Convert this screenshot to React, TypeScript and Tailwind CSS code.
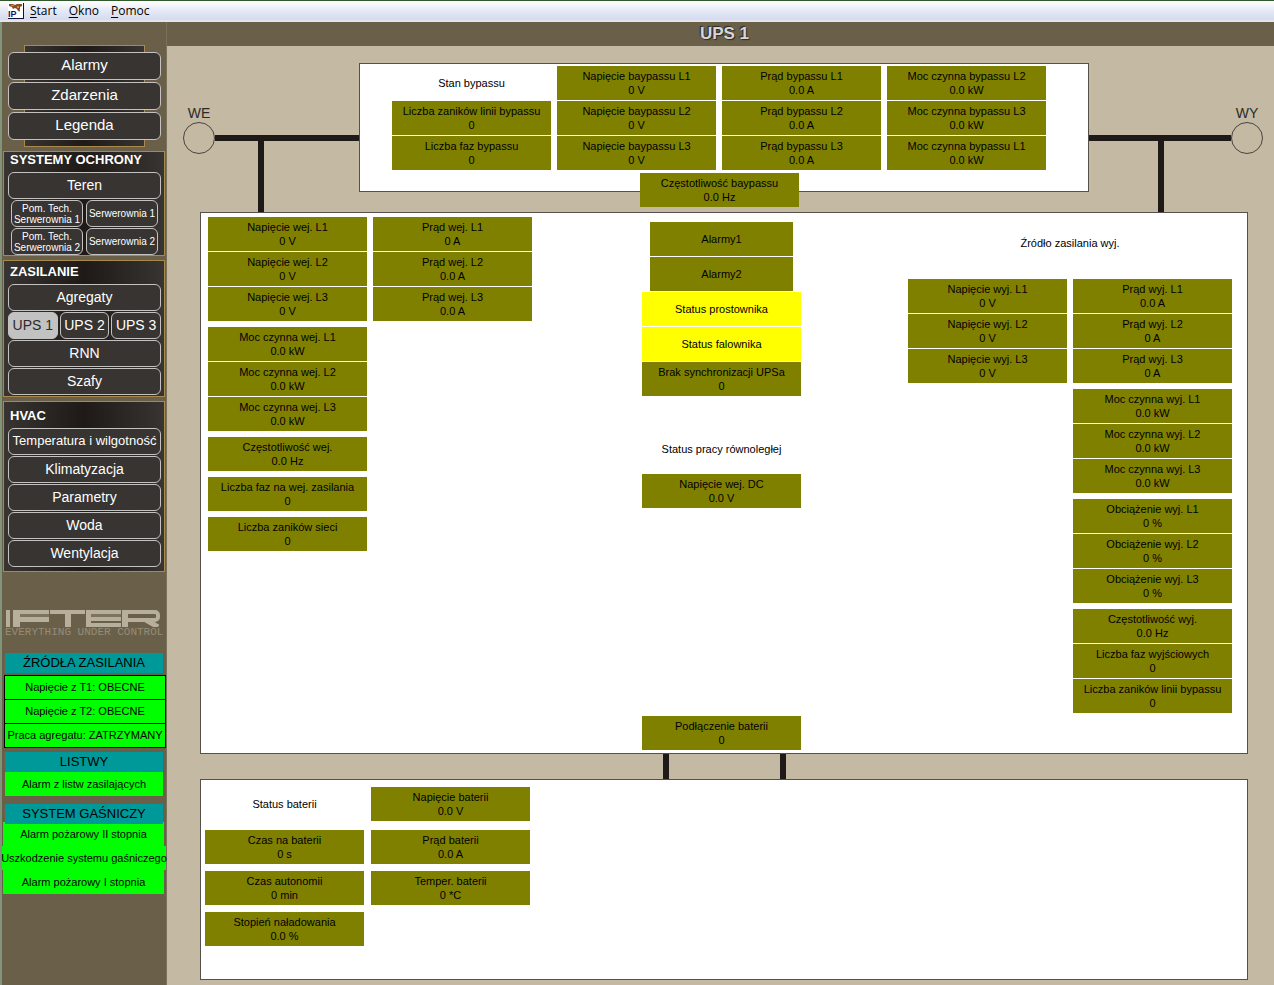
import { type JSX, type ReactNode } from "react"
import clsx from "clsx"

type Reading = { label: string; value?: string; tone?: "olive" | "yellow" | "plain"; narrow?: boolean }

const r = (label: string, value: string): Reading => ({ label, value })

const bypassColumns: Reading[][] = [
  [
    { label: "Stan bypassu", tone: "plain" },
    r("Liczba zaników linii bypassu", "0"),
    r("Liczba faz bypassu", "0"),
  ],
  [r("Napięcie baypassu L1", "0 V"), r("Napięcie baypassu L2", "0 V"), r("Napięcie baypassu L3", "0 V")],
  [r("Prąd bypassu L1", "0.0 A"), r("Prąd bypassu L2", "0.0 A"), r("Prąd bypassu L3", "0.0 A")],
  [r("Moc czynna bypassu L2", "0.0 kW"), r("Moc czynna bypassu L3", "0.0 kW"), r("Moc czynna bypassu L1", "0.0 kW")],
]

const inputGroups: Reading[][] = [
  [r("Napięcie wej. L1", "0 V"), r("Napięcie wej. L2", "0 V"), r("Napięcie wej. L3", "0 V")],
  [r("Moc czynna wej. L1", "0.0 kW"), r("Moc czynna wej. L2", "0.0 kW"), r("Moc czynna wej. L3", "0.0 kW")],
  [r("Częstotliwość wej.", "0.0 Hz")],
  [r("Liczba faz na wej. zasilania", "0")],
  [r("Liczba zaników sieci", "0")],
]

const inputCurrents: Reading[] = [r("Prąd wej. L1", "0 A"), r("Prąd wej. L2", "0.0 A"), r("Prąd wej. L3", "0.0 A")]

const statuses: Reading[] = [
  { label: "Alarmy1", narrow: true },
  { label: "Alarmy2", narrow: true },
  { label: "Status prostownika", tone: "yellow" },
  { label: "Status falownika", tone: "yellow" },
  r("Brak synchronizacji UPSa", "0"),
]

const outputVoltages: Reading[] = [r("Napięcie wyj. L1", "0 V"), r("Napięcie wyj. L2", "0 V"), r("Napięcie wyj. L3", "0 V")]

const outputGroups: Reading[][] = [
  [r("Prąd wyj. L1", "0.0 A"), r("Prąd wyj. L2", "0 A"), r("Prąd wyj. L3", "0 A")],
  [r("Moc czynna wyj. L1", "0.0 kW"), r("Moc czynna wyj. L2", "0.0 kW"), r("Moc czynna wyj. L3", "0.0 kW")],
  [r("Obciążenie wyj. L1", "0 %"), r("Obciążenie wyj. L2", "0 %"), r("Obciążenie wyj. L3", "0 %")],
  [r("Częstotliwość wyj.", "0.0 Hz"), r("Liczba faz wyjściowych", "0"), r("Liczba zaników linii bypassu", "0")],
]

function Tile({ label, value, tone = "olive", narrow }: Reading): JSX.Element {
  return (
    <div
      className={clsx(
        "flex h-[34px] shrink-0 flex-col items-center justify-center text-center text-[11px] leading-[14px] whitespace-nowrap text-black",
        narrow ? "w-[143px]" : "w-[159px]",
        tone === "olive" && "bg-[#808000]",
        tone === "yellow" && "bg-[#ffff00]",
      )}
    >
      <span>{label}</span>
      {value && <span>{value}</span>}
    </div>
  )
}

function Stack({ items }: { items: Reading[] }): JSX.Element {
  return (
    <div className="flex flex-col items-center gap-px">
      {items.map(item => (
        <Tile key={item.label} {...item} />
      ))}
    </div>
  )
}

function AppIcon(): JSX.Element {
  return (
    <svg width="16" height="16" viewBox="0 0 16 16" aria-hidden="true">
      <rect width="16" height="16" fill="#10103c" />
      <rect width="15" height="15" fill="#ffffff" />
      <path d="M1 1h4l2 1 2-1h5v2l-2 1v2l-2 2-1-2-2-1-2 1-1-2-3-1z" fill="#8a4a24" />
      <path d="M3 2h3v1H3zM9 3h2v2H9z" fill="#d88a4a" />
      <path d="M10 6l2 1-1 2z" fill="#4a2210" />
      <text x="0" y="14" fontSize="9" fontWeight="700" fontFamily="Liberation Sans, sans-serif" fill="#14146e">
        IP
      </text>
    </svg>
  )
}

function MenuBar(): JSX.Element {
  return (
    <nav className="flex h-[22px] items-center border-t border-b-2 border-t-[#2f5a2c] border-b-[#e4e4ec] bg-linear-to-b from-white via-[#e6eaf6] to-[#d3dbef] pl-2 font-['Open_Sans',sans-serif] text-xs text-black">
      <AppIcon />
      {["Start", "Okno", "Pomoc"].map(name => (
        <button key={name} type="button" className="px-1.5 leading-4">
          <span className="underline underline-offset-2">{name[0]}</span>
          {name.slice(1)}
        </button>
      ))}
    </nav>
  )
}

function NavButton({ children, size = "md", active }: { children: ReactNode; size?: "lg" | "md" | "sm" | "xs"; active?: boolean }): JSX.Element {
  return (
    <button
      type="button"
      className={clsx(
        "flex items-center justify-center rounded-md border border-[#c4c2c0] text-center whitespace-nowrap",
        active ? "bg-[#c2c2c2] text-[#2b2a29]" : "bg-[#373431] text-white",
        size === "lg" && "h-7 pb-0.5 text-[15px] leading-5",
        size === "md" && "h-[27px] pb-0.5 text-sm",
        size === "sm" && "h-[27px] pb-0.5 text-[13px]",
        size === "xs" && "h-[27px] rounded-lg text-[10px] leading-[11px]",
      )}
    >
      {children}
    </button>
  )
}

function NavPanel({ title, children, className }: { title: string; children: ReactNode; className?: string }): JSX.Element {
  return (
    <section className={clsx("flex flex-col border border-[#a8894e] bg-linear-to-r from-[#373431] via-[#1f1a17] to-[#373431] pr-[3px] pl-1", className)}>
      <h2 className="pl-0.5 text-[13px] leading-4 font-bold text-white">{title}</h2>
      <div className="flex flex-col gap-px">{children}</div>
    </section>
  )
}

function Logo(): JSX.Element {
  return (
    <div className="mx-[3px] mt-[38px] flex h-[27px] flex-col">
      <svg className="shrink-0" width="156" height="17" viewBox="0 0 156 17" fill="#b7af9b" role="img" aria-label="IFTER">
        <rect x="1" width="4" height="17" />
        <rect x="8" width="36" height="4" />
        <rect x="8" y="4" width="36" height="3" opacity="0.25" />
        <rect x="8" y="7" width="36" height="5" />
        <rect x="8" width="7" height="17" />
        <rect x="45" width="35" height="4" />
        <rect x="60" width="6" height="17" />
        <rect x="81" width="35" height="4" />
        <rect x="81" y="4" width="35" height="3" opacity="0.25" />
        <rect x="81" y="7" width="35" height="4" />
        <rect x="81" y="13" width="35" height="4" />
        <rect x="81" width="5" height="17" />
        <rect x="119" y="2" width="34" height="8" rx="3" fill="none" stroke="#b7af9b" strokeWidth="4" />
        <rect x="117" width="6" height="17" />
        <line x1="141" y1="10" x2="153" y2="17" stroke="#b7af9b" strokeWidth="5" />
      </svg>
      <p className="font-['Liberation_Mono',monospace] text-[11px] leading-[11px] whitespace-nowrap text-[#958c77]">EVERYTHING UNDER CONTROL</p>
    </div>
  )
}

function StatusHeader({ children }: { children: ReactNode }): JSX.Element {
  return <h2 className="relative z-10 mx-[3px] h-5 bg-[#009999] text-center text-[13px] leading-5 whitespace-nowrap text-black">{children}</h2>
}

function Sidebar(): JSX.Element {
  return (
    <aside className="flex w-[167px] shrink-0 flex-col border-r border-l-2 border-r-[#7b725c] border-l-[#7f9478] bg-[#6a6049]">
      <div className="mt-[23px] mr-[21px] ml-[22px] flex flex-col gap-0.5 border border-[#a8894e] bg-linear-to-r from-[#373431] via-[#1f1a17] to-[#373431] py-1.5">
        {["Alarmy", "Zdarzenia", "Legenda"].map(name => (
          <div key={name} className="-mx-[17px] flex flex-col">
            <NavButton size="lg">{name}</NavButton>
          </div>
        ))}
      </div>

      <div className="mx-px mt-1 flex flex-col gap-1">
        <NavPanel title="SYSTEMY OCHRONY" className="[&>h2]:pb-1">
          <NavButton>Teren</NavButton>
          <div className="grid grid-cols-2 gap-x-[3px] gap-y-px px-[3px]">
            <NavButton size="xs">
              Pom. Tech.
              <br />
              Serwerownia 1
            </NavButton>
            <NavButton size="xs">Serwerownia 1</NavButton>
            <NavButton size="xs">
              Pom. Tech.
              <br />
              Serwerownia 2
            </NavButton>
            <NavButton size="xs">Serwerownia 2</NavButton>
          </div>
        </NavPanel>

        <NavPanel title="ZASILANIE" className="pb-px [&>h2]:pt-[3px] [&>h2]:pb-1">
          <NavButton>Agregaty</NavButton>
          <div className="grid grid-cols-3 gap-0.5">
            <NavButton active>UPS 1</NavButton>
            <NavButton>UPS 2</NavButton>
            <NavButton>UPS 3</NavButton>
          </div>
          <NavButton>RNN</NavButton>
          <NavButton>Szafy</NavButton>
        </NavPanel>

        <NavPanel title="HVAC" className="pb-1 [&>h2]:pt-1.5 [&>h2]:pb-1">
          <NavButton size="sm">Temperatura i wilgotność</NavButton>
          <NavButton>Klimatyzacja</NavButton>
          <NavButton>Parametry</NavButton>
          <NavButton>Woda</NavButton>
          <NavButton>Wentylacja</NavButton>
        </NavPanel>
      </div>

      <Logo />

      <div className="mt-4 text-[11px] text-black">
        <StatusHeader>ŹRÓDŁA ZASILANIA</StatusHeader>
        <ul className="mt-0.5 ml-0.5 divide-y divide-black border border-black bg-[#00ff00] text-center leading-[23px] whitespace-nowrap">
          <li>Napięcie z T1: OBECNE</li>
          <li>Napięcie z T2: OBECNE</li>
          <li>Praca agregatu: ZATRZYMANY</li>
        </ul>
      </div>

      <div className="mt-1 text-[11px] text-black">
        <StatusHeader>LISTWY</StatusHeader>
        <p className="mx-[3px] bg-[#00ff00] text-center leading-6 whitespace-nowrap">Alarm z listw zasilających</p>
      </div>

      <div className="mt-2 text-[11px] text-black">
        <StatusHeader>SYSTEM GAŚNICZY</StatusHeader>
        <ul className="mr-0.5 ml-px -mt-0.5 flex flex-col bg-[#00ff00] text-center leading-6 whitespace-nowrap">
          <li>Alarm pożarowy II stopnia</li>
          <li className="-mr-0.5 -ml-px flex justify-center bg-[#00ff00]">Uszkodzenie systemu gaśniczego</li>
          <li>Alarm pożarowy I stopnia</li>
        </ul>
      </div>
    </aside>
  )
}

function Terminal({ name }: { name: string }): JSX.Element {
  return (
    <div className="flex w-8 shrink-0 flex-col items-center pt-[41px] text-[#2b2a29]">
      <span className="text-sm leading-[18px]">{name}</span>
      <div className="size-8 rounded-full border border-[#4a4440]" />
    </div>
  )
}

function BypassSection(): JSX.Element {
  return (
    <div className="flex h-[149px] pr-[11px] pl-4">
      <Terminal name="WE" />
      <div className="flex w-36 shrink-0 flex-col pt-[72px]">
        <div className="h-1.5 bg-[#1f1a17]" />
        <div className="ml-[43px] w-1.5 grow bg-[#1f1a17]" />
      </div>
      <section className="relative h-[129px] grow border border-[#55504b] bg-white pt-0.5 pl-8">
        <div className="flex gap-1.5">
          {bypassColumns.map(column => (
            <Stack key={column[0].label} items={column} />
          ))}
        </div>
        <div className="absolute -bottom-4 left-[280px]">
          <Tile label="Częstotliwość baypassu" value="0.0 Hz" />
        </div>
      </section>
      <div className="flex w-[142px] shrink-0 flex-col pt-[72px]">
        <div className="h-1.5 bg-[#1f1a17]" />
        <div className="mr-[67px] ml-auto w-1.5 grow bg-[#1f1a17]" />
      </div>
      <Terminal name="WY" />
    </div>
  )
}

function UpsSection(): JSX.Element {
  return (
    <section className="flex min-h-[542px] border border-[#55504b] bg-white pr-[15px] pl-[7px]">
      <div className="flex gap-1.5 pt-1">
        <div className="flex flex-col gap-1.5">
          {inputGroups.map(group => (
            <Stack key={group[0].label} items={group} />
          ))}
        </div>
        <Stack items={inputCurrents} />
      </div>

      <div className="flex grow flex-col items-center pt-[9px] pb-[3px] pl-[3px]">
        <Stack items={statuses} />
        <div className="mt-9 flex flex-col gap-2">
          <Tile label="Status pracy równoległej" tone="plain" />
          <Tile label="Napięcie wej. DC" value="0.0 V" />
        </div>
        <div className="mt-auto">
          <Tile label="Podłączenie baterii" value="0" />
        </div>
      </div>

      <div className="flex flex-col items-center gap-[19px] pt-[13px]">
        <Tile label="Źródło zasilania wyj." tone="plain" />
        <div className="flex gap-1.5">
          <Stack items={outputVoltages} />
          <div className="flex flex-col gap-1.5">
            {outputGroups.map(group => (
              <Stack key={group[0].label} items={group} />
            ))}
          </div>
        </div>
      </div>
    </section>
  )
}

function BatterySection(): JSX.Element {
  return (
    <section className="flex min-h-[201px] flex-col gap-[9px] border border-[#55504b] bg-white pt-[7px] pl-1">
      <div className="flex gap-[7px]">
        <Tile label="Status baterii" tone="plain" />
        <Tile label="Napięcie baterii" value="0.0 V" />
      </div>
      <div className="grid grid-cols-[159px_159px] gap-[7px]">
        <Tile label="Czas na baterii" value="0 s" />
        <Tile label="Prąd baterii" value="0.0 A" />
        <Tile label="Czas autonomii" value="0 min" />
        <Tile label="Temper. baterii" value="0 *C" />
        <Tile label="Stopień naładowania" value="0.0 %" />
      </div>
    </section>
  )
}

export default function App(): JSX.Element {
  return (
    <div className="flex min-h-screen flex-col bg-[#c4b9a2] font-['Liberation_Sans',Arial,sans-serif]">
      <MenuBar />
      <div className="flex grow">
        <Sidebar />
        <main className="flex grow flex-col">
          <h1 className="h-6 bg-[#6a6049] pl-2 text-center text-[17px] leading-6 font-bold text-[#d4d6da] [text-shadow:1px_1px_1px_#2b2a29,-1px_-1px_1px_#2b2a29]">
            UPS 1
          </h1>
          <div className="flex grow flex-col pt-[17px]">
            <BypassSection />
            <div className="flex flex-col pr-[26px] pb-[5px] pl-[33px]">
              <UpsSection />
              <div className="flex h-[25px] justify-center gap-[111px]">
                <div className="w-1.5 bg-[#1f1a17]" />
                <div className="w-1.5 bg-[#1f1a17]" />
              </div>
              <BatterySection />
            </div>
          </div>
        </main>
      </div>
    </div>
  )
}
